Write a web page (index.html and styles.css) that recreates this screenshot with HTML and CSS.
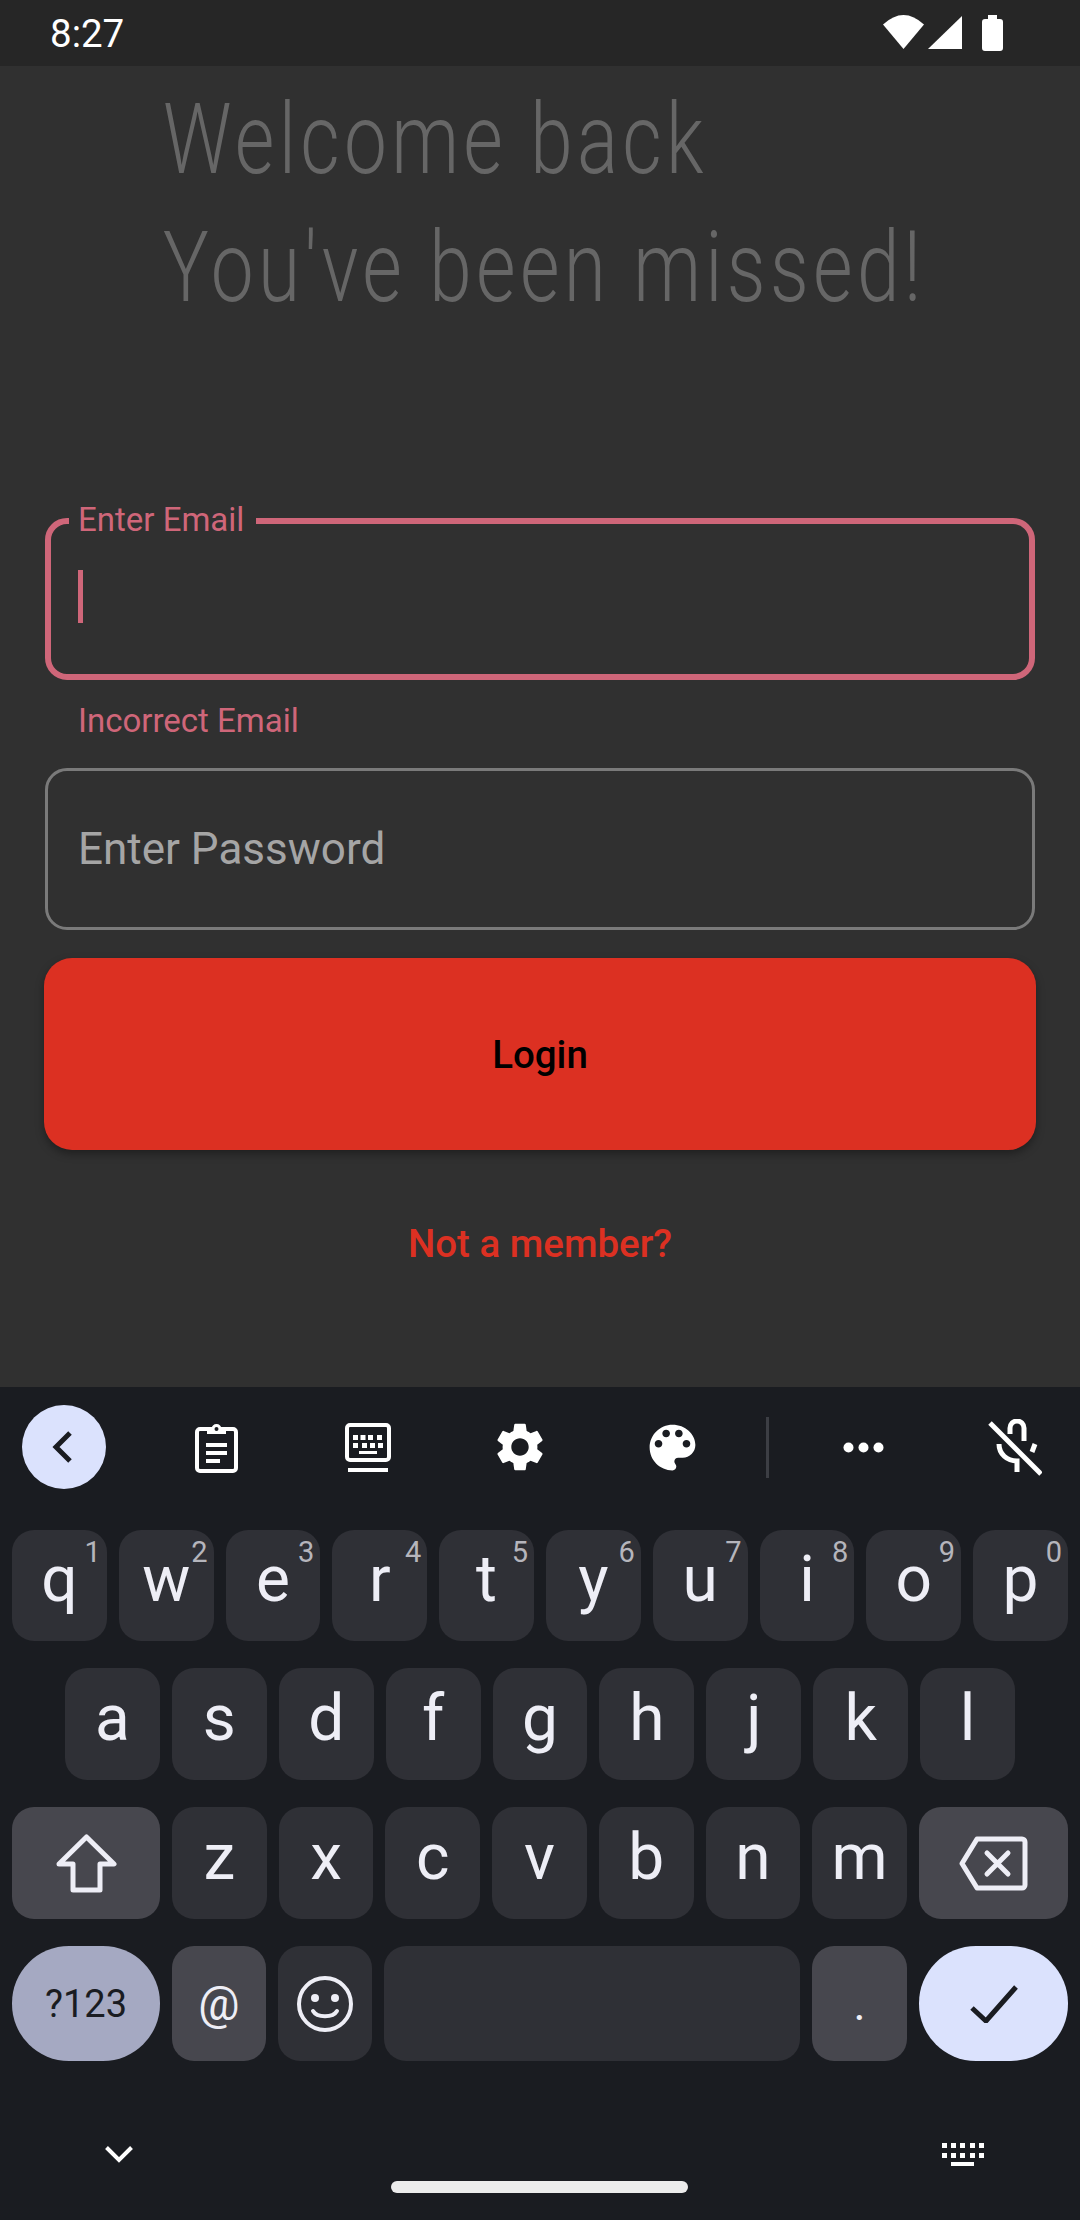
FILE: index.html
```html
<!DOCTYPE html>
<html lang="en">
<head>
    <meta charset="UTF-8">
    <meta name="viewport" content="width=device-width, initial-scale=1.0">
    <title>Login</title>
    <link rel="stylesheet" href="styles.css">
</head>
<body>
    <div class="status-bar">
        <span class="time">8:27</span>
        <div class="status-icons">
            <svg width="41" height="34" viewBox="0 0 41 34"><path d="M20.5 34 L0 9.5 Q20.5 -9.5 41 9.5 Z" fill="#fff"/></svg>
            <svg class="signal" width="34" height="33" viewBox="0 0 34 33"><path d="M34 0 V33 H0 Z" fill="#fff"/></svg>
            <svg class="battery" width="21" height="36" viewBox="0 0 21 36"><path d="M6 0 H15 V4 H18 A3 3 0 0 1 21 7 V33 A3 3 0 0 1 18 36 H3 A3 3 0 0 1 0 33 V7 A3 3 0 0 1 3 4 H6 Z" fill="#fff"/></svg>
        </div>
    </div>

    <main class="screen">
        <h1 class="title">
            <span>Welcome back</span>
            <span>You've been missed!</span>
        </h1>

        <div class="field field-error">
            <label class="float-label">Enter Email</label>
            <div class="caret"></div>
        </div>
        <p class="error-text">Incorrect Email</p>

        <div class="field field-idle">
            <span class="placeholder">Enter Password</span>
        </div>

        <button class="login-btn">Login</button>
        <a class="member-link">Not a member?</a>
    </main>

    <section class="keyboard">
        <div class="toolbar">
            <div class="back-btn">
                <svg width="22" height="34" viewBox="0 0 22 34"><path d="M19 3 L5 17 L19 31" fill="none" stroke="#1a1c21" stroke-width="5"/></svg>
            </div>
            <div class="tool">
                <svg width="43" height="51" viewBox="0 0 43 51" fill="none" stroke="#fff" stroke-width="4">
                    <rect x="2" y="7" width="39" height="42" rx="3"/>
                    <path d="M11 23 H32 M11 31 H32 M11 39 H25"/>
                    <path d="M12 8 H31 V12 H12 Z" fill="#fff" stroke="none"/>
                    <circle cx="21.5" cy="7" r="3.5" fill="#1a1c21" stroke="#fff" stroke-width="3"/>
                </svg>
            </div>
            <div class="tool">
                <svg width="46" height="49" viewBox="0 0 46 49" fill="none">
                    <rect x="2" y="2" width="42" height="35" rx="3" stroke="#fff" stroke-width="4"/>
                    <path d="M8 12 h5 v5 h-5 z M15.500 12 h5 v5 h-5 z M23 12 h5 v5 h-5 z M32 12 h5 v5 h-5 z M8 20 h5 v5 h-5 z M17 20 h5 v5 h-5 z M25 20 h5 v5 h-5 z M33 20 h5 v5 h-5 z M14 28 h18 v3 h-18 z M3 45 H43 V49 H3 Z" fill="#fff"/>
                </svg>
            </div>
            <div class="tool">
                <svg width="58" height="58" viewBox="0 0 24 24"><path fill="#fff" d="M19.14 12.94c.04-.3.06-.61.06-.94 0-.32-.02-.64-.07-.94l2.03-1.58c.18-.14.23-.41.12-.61l-1.920-3.32c-.12-.22-.37-.29-.59-.22l-2.390.96c-.5-.38-1.030-.7-1.620-.94l-.36-2.540c-.04-.24-.24-.41-.48-.41h-3.840c-.24 0-.43.17-.47.41l-.36 2.540c-.59.24-1.130.57-1.620.94l-2.390-.96c-.22-.08-.47 0-.59.22L2.740 8.870c-.12.21-.08.47.12.61l2.030 1.580c-.05.3-.09.63-.09.94s.02.64.07.94l-2.030 1.580c-.18.14-.23.41-.12.61l1.920 3.320c.12.22.37.29.59.22l2.390-.96c.5.38 1.030.7 1.620.94l.36 2.54c.05.24.24.41.48.41h3.840c.24 0 .44-.17.47-.41l.36-2.54c.59-.24 1.130-.56 1.620-.94l2.390.96c.22.08.47 0 .59-.22l1.920-3.320c.12-.22.07-.47-.12-.61l-2.010-1.580zM12 15.600c-1.980 0-3.600-1.620-3.600-3.600s1.620-3.600 3.600-3.600 3.600 1.620 3.600 3.600-1.620 3.600-3.600 3.600z"/></svg>
            </div>
            <div class="tool">
                <svg width="61" height="61" viewBox="0 0 24 24"><path fill="#fff" d="M12 3c-4.970 0-9 4.030-9 9s4.030 9 9 9c.83 0 1.500-.67 1.500-1.500 0-.39-.15-.74-.39-1.010-.23-.26-.38-.61-.38-.99 0-.83.67-1.500 1.500-1.500H16c2.760 0 5-2.240 5-5 0-4.420-4.030-8-9-8zm-5.500 9c-.83 0-1.500-.67-1.500-1.500S5.670 9 6.500 9 8 9.670 8 10.500 7.330 12 6.500 12zm3-4C8.670 8 8 7.330 8 6.500S8.670 5 9.500 5s1.500.67 1.500 1.500S10.330 8 9.500 8zm5 0c-.83 0-1.500-.67-1.500-1.500S13.670 5 14.500 5s1.500.67 1.500 1.500S15.330 8 14.500 8zm3 4c-.83 0-1.500-.67-1.500-1.500S16.670 9 17.500 9s1.500.67 1.500 1.500-.67 1.500-1.500 1.500z"/></svg>
            </div>
            <div class="tool-divider"></div>
            <div class="tool tool-more">
                <svg width="41" height="11" viewBox="0 0 41 11" fill="#fff"><circle cx="5.500" cy="5.500" r="5"/><circle cx="20.500" cy="5.500" r="5"/><circle cx="35.500" cy="5.500" r="5"/></svg>
            </div>
            <div class="tool tool-mic">
                <svg width="54" height="57" viewBox="0 0 54 57" fill="none" stroke="#fff" stroke-width="5">
                    <path d="M22 15 V9 A7 7 0 0 1 36 9 V22"/>
                    <path d="M11 25 C11 35 19 42 29 42 V53"/>
                    <path d="M47 25 L44 33"/>
                    <path d="M2 4 L53 55"/>
                </svg>
            </div>
        </div>

        <div class="key-rows">
            <div class="key-row">
                <div class="key">q<sup class="hint">1</sup></div>
                <div class="key">w<sup class="hint">2</sup></div>
                <div class="key">e<sup class="hint">3</sup></div>
                <div class="key">r<sup class="hint">4</sup></div>
                <div class="key">t<sup class="hint">5</sup></div>
                <div class="key">y<sup class="hint">6</sup></div>
                <div class="key">u<sup class="hint">7</sup></div>
                <div class="key">i<sup class="hint">8</sup></div>
                <div class="key">o<sup class="hint">9</sup></div>
                <div class="key">p<sup class="hint">0</sup></div>
            </div>
            <div class="key-row key-row-inset">
                <div class="key">a</div>
                <div class="key">s</div>
                <div class="key">d</div>
                <div class="key">f</div>
                <div class="key">g</div>
                <div class="key">h</div>
                <div class="key">j</div>
                <div class="key">k</div>
                <div class="key">l</div>
            </div>
            <div class="key-row key-row-third">
                <div class="key key-shift key-mod">
                    <svg width="61" height="59" viewBox="0 0 61 59"><path d="M30.500 3 L58 30 H44 V56 H17 V30 H3 Z" fill="none" stroke="#eeeef6" stroke-width="5" stroke-linejoin="round"/></svg>
                </div>
                <div class="key">z</div>
                <div class="key">x</div>
                <div class="key">c</div>
                <div class="key">v</div>
                <div class="key">b</div>
                <div class="key">n</div>
                <div class="key">m</div>
                <div class="key key-wide key-mod">
                    <svg width="69" height="55" viewBox="0 0 69 55" fill="none" stroke="#eeeef6" stroke-width="5" stroke-linejoin="round" stroke-linecap="round"><path d="M18 3 H63 A3 3 0 0 1 66 6 V49 A3 3 0 0 1 63 52 H18 L3 27.500 Z"/><path d="M28 17 L49 38 M49 17 L28 38"/></svg>
                </div>
            </div>
            <div class="key-row key-row-last">
                <div class="key key-shift key-symbols">?123</div>
                <div class="key key-mod key-at">@</div>
                <div class="key key-emoji">
                    <svg width="56" height="56" viewBox="0 0 56 56" fill="none" stroke="#eeeef6" stroke-width="4"><circle cx="28" cy="28" r="26"/><circle cx="18" cy="22" r="4" fill="#eeeef6" stroke="none"/><circle cx="38" cy="22" r="4" fill="#eeeef6" stroke="none"/><path d="M16 35 C20 42 36 42 40 35" stroke-linecap="round"/></svg>
                </div>
                <div class="key key-space"></div>
                <div class="key key-mod key-dot">.</div>
                <div class="key key-wide key-enter">
                    <svg width="48" height="38" viewBox="0 0 48 38"><path d="M2 23 L16 36 L46 2" fill="none" stroke="#1a1c21" stroke-width="5"/></svg>
                </div>
            </div>
        </div>

        <div class="nav-row">
            <svg class="nav-down" width="28" height="17" viewBox="0 0 28 17"><path d="M1.500 1.500 L14 14 L26.500 1.500" fill="none" stroke="#fff" stroke-width="4"/></svg>
            <div class="home-pill"></div>
            <svg class="nav-kb" width="42" height="23" viewBox="0 0 42 23" fill="#fff">
                <path d="M0 0 h5 v5 h-5 z M9 0 h5 v5 h-5 z M18 0 h5 v5 h-5 z M28 0 h5 v5 h-5 z M37 0 h5 v5 h-5 z M0 10 h5 v5 h-5 z M9 10 h5 v5 h-5 z M18 10 h5 v5 h-5 z M28 10 h5 v5 h-5 z M37 10 h5 v5 h-5 z M9 19 h23 v4 h-23 z"/>
            </svg>
        </div>
    </section>
</body>
</html>
```

FILE: styles.css
```css
* {
    box-sizing: border-box;
}
body {
    margin: 0;
    width: 1080px;
    height: 2220px;
    overflow: hidden;
    font-family: Roboto, "Liberation Sans", sans-serif;
    background: #303030;
}

/* status bar */
.status-bar {
    height: 66px;
    background: #262626;
    display: flex;
    justify-content: space-between;
    padding: 15px 77px 0 50px;
}
.time {
    color: #fff;
    font-size: 38.5px;
    line-height: 38px;
}
.status-icons {
    display: flex;
    align-items: flex-start;
}
.signal {
    margin: 1px 0 0 4px;
}
.battery {
    margin-left: 20px;
}

/* login form */
.screen {
    height: 1321px;
    padding: 0 45px;
    display: flex;
    flex-direction: column;
}
.title {
    margin: 10px 0 0 118px;
    height: 254px;
    font-size: 98px;
    font-weight: 300;
    line-height: 127.500px;
    color: #666;
    white-space: nowrap;
    transform: scaleX(0.78);
    transform-origin: left top;
    letter-spacing: 5.600px;
}
.title span {
    display: block;
}
.field {
    position: relative;
    height: 162px;
    width: 990px;
    border-radius: 22px;
    display: flex;
    align-items: center;
}
.field-error {
    margin-top: 188px;
    border: 6px solid #cf6679;
    padding-left: 27px;
}
.field-idle {
    border: 3px solid #7a7a7a;
    padding-left: 30px;
}
.float-label {
    position: absolute;
    left: 18px;
    top: -24px;
    padding: 0 12px 0 9px;
    background: #303030;
    color: #cf6679;
    font-size: 33px;
    line-height: 40px;
}
.caret {
    width: 5px;
    height: 53px;
    margin-top: -5px;
    background: #cf6679;
}
.error-text {
    margin: 21px 0 0 33px;
    height: 67px;
    color: #cf6679;
    font-size: 33px;
    line-height: 40px;
}
.placeholder {
    color: #a5a5a5;
    font-size: 44px;
}
.login-btn {
    margin-top: 28px;
    height: 192px;
    width: 992px;
    margin-left: -1px;
    border: 0;
    border-radius: 28px;
    background: #dc3022;
    color: #000;
    font-family: inherit;
    font-size: 38.500px;
    font-weight: 500;
    box-shadow: 0 4px 8px rgba(0, 0, 0, 0.35);
}
.member-link {
    margin-top: 71px;
    text-align: center;
    color: #dc3022;
    font-size: 38.500px;
    font-weight: 500;
    line-height: 46px;
}

/* keyboard */
.keyboard {
    height: 833px;
    background: #1a1c21;
    color: #eeeef6;
}
.toolbar {
    height: 143px;
    display: flex;
    align-items: center;
    padding: 0 0 23px 22px;
}
.back-btn {
    width: 84px;
    height: 84px;
    border-radius: 50%;
    background: #dbe2fd;
    display: flex;
    align-items: center;
    justify-content: center;
    margin-right: 34px;
}
.back-btn svg {
    margin-right: 5px;
}
.tool {
    width: 152px;
    display: flex;
    justify-content: center;
    align-items: center;
}
.tool-divider {
    width: 3px;
    height: 61px;
    margin-left: 18px;
    background: #3c3e44;
}
.tool-more {
    width: 188px;
}
.tool-mic {
    width: 116px;
}
.key-rows {
    display: flex;
    flex-direction: column;
    gap: 27px;
}
.key-row {
    height: 111px;
    display: flex;
    gap: 12px;
    padding: 0 12px;
}
.key-row-inset {
    height: 112px;
    padding: 0 65px;
}
.key-row-third {
    height: 112px;
}
.key-row-last {
    height: 115px;
}
.key {
    position: relative;
    flex: 1 1 0;
    background: #2f3036;
    border-radius: 22px;
    display: flex;
    align-items: center;
    justify-content: center;
    font-size: 64px;
    padding-bottom: 12px;
}
.key-row .key-shift {
    flex: 0 0 148px;
    padding-bottom: 0;
}
.key-row .key-wide {
    flex: 0 0 149px;
    padding-bottom: 0;
}
.key-row-last .key {
    padding-bottom: 0;
}
.key-at,
.key-emoji {
    flex: 0 0 94px;
}
.key-dot {
    flex: 0 0 95px;
}
.key-mod {
    background: #47474e;
}
.hint {
    position: absolute;
    top: 5px;
    right: 6px;
    font-size: 29px;
    line-height: 34px;
    color: #b5b5bc;
}
.key-row .key-symbols {
    background: #a5a9c2;
    color: #1a1c21;
    font-size: 38px;
    border-radius: 57px;
}
.key-row .key-enter {
    background: #dbe2fd;
    border-radius: 57px;
}
.key-at {
    font-size: 46px;
}
.key-dot {
    font-size: 46px;
}
.nav-row {
    position: relative;
    height: 159px;
}
.nav-down {
    position: absolute;
    left: 105px;
    top: 85px;
}
.nav-kb {
    position: absolute;
    left: 942px;
    top: 82px;
}
.home-pill {
    position: absolute;
    left: 391px;
    top: 120px;
    width: 297px;
    height: 12px;
    border-radius: 6px;
    background: #ececec;
}
```
